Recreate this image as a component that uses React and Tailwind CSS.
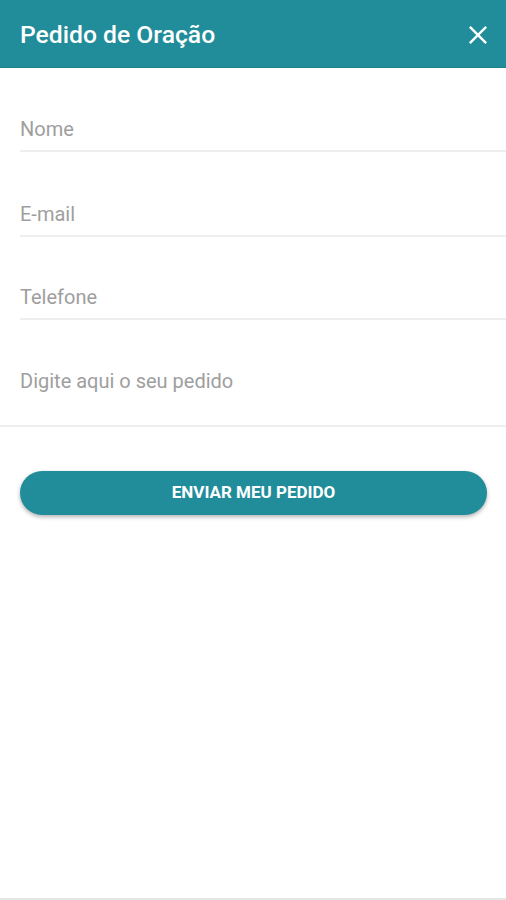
import React from "react";

const fields = ["Nome", "E-mail", "Telefone"];

export default function App() {
  return (
    <div
      className="h-[900px] bg-white flex flex-col border-b-2 border-[#e4e6e6]"
      style={{ fontFamily: "Roboto, 'Liberation Sans', sans-serif" }}
    >
      <header className="h-[68px] bg-[#218d9a] flex items-center justify-between pl-[20px] pr-[16px] pt-[3px] border-b border-[#1d8390]">
        <h1 className="text-white text-[24.7px] font-medium">Pedido de Oração</h1>
        <button className="w-[24px] h-[24px] flex items-center justify-center">
          <svg viewBox="0 0 24 24" width="22" height="22" fill="none" stroke="white" strokeWidth="2.6" strokeLinecap="square">
            <path d="M4 4 L20 20 M20 4 L4 20" />
          </svg>
        </button>
      </header>

      <form className="flex flex-col">
        {fields.map((f, i) => (
          <div
            key={f}
            className={`${i === 0 ? "h-[84px]" : i === 1 ? "h-[85px]" : "h-[83px]"} ml-[20px] flex items-end pb-[9px] border-b-2 border-[#eeeeee]`}
          >
            <input
              placeholder={f}
              className="w-full text-[20px] leading-[24px] text-[#555] placeholder:text-[#9e9e9e] outline-none bg-transparent"
            />
          </div>
        ))}
        <div className="h-[107px] pt-[49px] border-b-2 border-[#eeeeee]">
          <textarea
            placeholder="Digite aqui o seu pedido"
            className="w-full pl-[20px] text-[20px] leading-[24px] placeholder:text-[#9e9e9e] outline-none resize-none bg-transparent"
            rows={1}
          />
        </div>
        <div className="mt-[44px] pl-[20px] pr-[19px]">
          <button
            type="button"
            className="w-full h-[44px] rounded-full bg-[#218d9a] text-white text-[17px] font-bold shadow-[0_2px_4px_rgba(0,0,0,0.3)]"
          >
            ENVIAR MEU PEDIDO
          </button>
        </div>
      </form>
    </div>
  );
}
